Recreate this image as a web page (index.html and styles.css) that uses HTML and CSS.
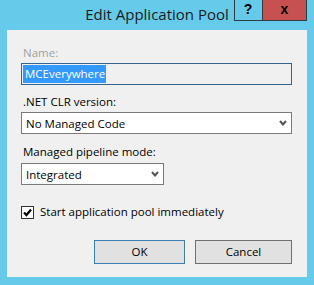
FILE: index.html
```html
<!DOCTYPE html>
<html>
<head>
<meta charset="utf-8">
<link rel="stylesheet" href="styles.css">
</head>
<body>
<div class="window">
  <div class="titlebar">
    <div class="title">Edit Application Pool</div>
    <div class="caption-btns">
      <svg class="cap-bg" width="73" height="21" viewBox="0 0 73 21">
        <rect x="0" y="-1" width="73" height="22" fill="#2e3c44"/>
        <rect x="1" y="0" width="27" height="20" fill="#66cbea"/>
        <rect x="29" y="0" width="43" height="20" fill="#c75050"/>
      </svg>
      <div class="cbtn cbtn-help">?</div>
      <div class="cbtn cbtn-close">x</div>
    </div>
  </div>
  <div class="client">
    <div class="label disabled">Name:</div>
    <div class="textbox"><span class="sel">MCEverywhere</span></div>
    <div class="label l2">.NET CLR version:</div>
    <div class="combo wide"><span>No Managed Code</span>
      <svg class="chev" width="8" height="6" viewBox="0 0 8 6"><polyline points="1,1 4,4.5 7,1" fill="none" stroke="#555" stroke-width="2"/></svg>
    </div>
    <div class="label l3">Managed pipeline mode:</div>
    <div class="combo narrow"><span>Integrated</span>
      <svg class="chev" width="8" height="6" viewBox="0 0 8 6"><polyline points="1,1 4,4.5 7,1" fill="none" stroke="#555" stroke-width="2"/></svg>
    </div>
    <label class="check">
      <span class="box"><svg width="11" height="11" viewBox="0 0 11 11"><polyline points="2,5.5 4.5,8 9,2.5" fill="none" stroke="#000" stroke-width="2.2"/></svg></span>
      <span>Start application pool immediately</span>
    </label>
    <div class="buttons">
      <div class="btn default">OK</div>
      <div class="btn">Cancel</div>
    </div>
  </div>
</div>
</body>
</html>
```
FILE: styles.css
```css
html, body {
  margin: 0;
  padding: 0;
  background: #66cbea;
}
body {
  width: 314px;
  height: 285px;
  overflow: hidden;
  font-family: "Segoe UI", "Open Sans", sans-serif;
  font-size: 11.5px;
  color: #000;
}
.window {
  width: 314px;
  height: 285px;
  display: flex;
  flex-direction: column;
}
.titlebar {
  height: 30px;
  position: relative;
  flex: none;
}
.title {
  text-align: center;
  font-size: 15px;
  line-height: 20px;
  padding-top: 4px;
  color: #1b1b1b;
}
.caption-btns {
  position: absolute;
  left: 234px;
  top: 0;
  width: 73px;
  height: 21px;
  display: flex;
}
.cap-bg {
  position: absolute;
  left: 0;
  top: 0;
}
.cbtn {
  position: relative;
  flex: none;
  height: 21px;
  font-family: "Liberation Sans", sans-serif;
  font-weight: bold;
  font-size: 14px;
  line-height: 19px;
  text-align: center;
  color: #000;
}
.cbtn-help { width: 28px; }
.cbtn-close { width: 45px; }
.client {
  margin: 0 7px 8px 7px;
  flex: 1;
  background: #f0f0f0;
  padding: 15px 15px 0 14px;
  display: flex;
  flex-direction: column;
  align-items: flex-start;
}
.label {
  line-height: 16px;
  height: 16px;
  padding-left: 2px;
}
.disabled { color: #a0a0a0; }
.textbox {
  margin-top: 2px;
  width: 271px;
  height: 22px;
  box-sizing: border-box;
  border: 1px solid #34648f;
  padding: 1px 0 0 1px;
  display: flex;
  align-items: flex-start;
}
.sel {
  background: #3399ff;
  color: #fff;
  line-height: 18px;
  padding: 0 1px 0 2px;
}
.l2 { margin-top: 9px; }
.l3 { margin-top: 10px; }
.combo {
  margin-top: 2px;
  height: 22px;
  box-sizing: border-box;
  border: 1px solid #7a7a7a;
  background: #fff;
  display: flex;
  align-items: center;
  justify-content: space-between;
  padding: 0 4px 0 4px;
}
.wide { width: 271px; }
.narrow { width: 143px; margin-top: 3px; }
.check {
  margin-top: 19px;
  display: flex;
  align-items: center;
  gap: 6px;
  line-height: 16px;
}
.box {
  width: 13px;
  height: 13px;
  box-sizing: border-box;
  border: 1px solid #333;
  background: #fff;
  display: flex;
  align-items: center;
  justify-content: center;
}
.buttons {
  margin-top: 20px;
  align-self: flex-end;
  display: flex;
  gap: 10px;
}
.btn {
  height: 24px;
  width: 91px;
  box-sizing: border-box;
  border: 1px solid #707070;
  background: #e1e1e1;
  text-align: center;
  line-height: 22px;
}
.btn.default { border-color: #3c7fb1; }
.btn + .btn { width: 97px; }
```
